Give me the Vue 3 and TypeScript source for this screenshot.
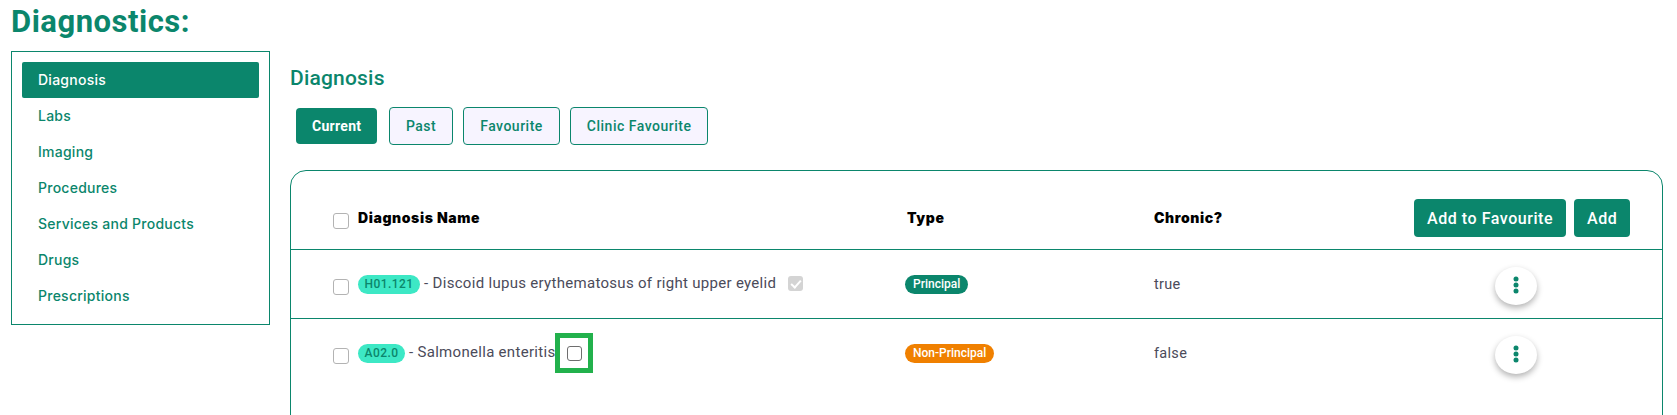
<script setup lang="ts">
interface Row {
  code: string;
  name: string;
  type: string;
  chronic: string;
  principal: boolean;
}

const menu: string[] = ["Diagnosis", "Labs", "Imaging", "Procedures", "Services and Products", "Drugs", "Prescriptions"];
const tabs: string[] = ["Current", "Past", "Favourite", "Clinic Favourite"];
const rows: Row[] = [
  { code: "H01.121", name: "Discoid lupus erythematosus of right upper eyelid", type: "Principal", chronic: "true", principal: true },
  { code: "A02.0", name: "Salmonella enteritis", type: "Non-Principal", chronic: "false", principal: false },
];
</script>

<template>
  <div class="page">
    <h1 class="title">Diagnostics:</h1>
    <div class="layout">
      <ul class="side">
        <li v-for="(item, i) in menu" :key="item" class="side-item" :class="{ active: i === 0 }">{{ item }}</li>
      </ul>

      <div class="main">
        <h2 class="heading">Diagnosis</h2>
        <div class="tabs">
          <button v-for="(tab, i) in tabs" :key="tab" class="tab" :class="{ current: i === 0 }">{{ tab }}</button>
        </div>

        <div class="table">
          <div class="row head">
            <div class="name-cell">
              <input type="checkbox" class="check" />
              <span class="head-text">Diagnosis Name</span>
            </div>
            <div class="head-text">Type</div>
            <div class="head-text">Chronic?</div>
            <div class="actions">
              <button class="action">Add to Favourite</button>
              <button class="action">Add</button>
            </div>
          </div>

          <div v-for="row in rows" :key="row.code" class="row body">
            <div class="name-cell">
              <input type="checkbox" class="check" />
              <span class="code">{{ row.code }}</span>
              <span class="desc">- {{ row.name }}</span>
              <input v-if="row.principal" type="checkbox" class="small done" checked disabled />
              <span v-else class="marked"><input type="checkbox" class="small" /></span>
            </div>
            <div>
              <span class="pill" :class="row.principal ? 'teal' : 'orange'">{{ row.type }}</span>
            </div>
            <div class="chronic">{{ row.chronic }}</div>
            <div class="more-cell">
              <button class="more" aria-label="More">
                <svg width="6" height="18" viewBox="0 0 6 18"><circle cx="3" cy="3" r="2.5" /><circle cx="3" cy="9" r="2.5" /><circle cx="3" cy="15" r="2.5" /></svg>
              </button>
            </div>
          </div>
        </div>
      </div>
    </div>
  </div>
</template>

<style>
html,
body {
  margin: 0;
  background: #fff;
  overflow: hidden;
}
</style>

<style scoped>
.page {
  width: 1677px;
  height: 415px;
  overflow: hidden;
  box-sizing: border-box;
  padding: 0 14px 0 11px;
  font-family: Roboto, "Liberation Sans", sans-serif;
  color: #0b866c;
}
.title {
  margin: 0;
  height: 51px;
  font-size: 31px;
  line-height: 43px;
  font-weight: 700;
  letter-spacing: 0.5px;
}
.layout {
  display: flex;
  align-items: flex-start;
  gap: 20px;
}
.side {
  width: 259px;
  height: 274px;
  box-sizing: border-box;
  margin: 0;
  padding: 10px;
  list-style: none;
  border: 1px solid #0b866c;
  flex: none;
}
.side-item {
  height: 36px;
  line-height: 36px;
  padding-left: 16px;
  border-radius: 2px;
  font-family: Inter, "Liberation Sans", sans-serif;
  font-size: 14px;
  font-weight: 500;
  letter-spacing: 0.25px;
}
.side-item.active {
  background: #0b866c;
  color: #fff;
}
.main {
  flex: 1;
  min-width: 0;
}
.heading {
  margin: 0;
  padding-top: 15px;
  height: 41px;
  font-size: 21px;
  line-height: 24px;
  font-weight: 500;
  letter-spacing: 0.2px;
}
.tabs {
  display: flex;
  align-items: center;
  gap: 10px;
  height: 38px;
  padding-left: 6px;
}
.tab {
  height: 38px;
  padding: 0 16px;
  border: 1px solid #0b866c;
  border-radius: 4px;
  background: #f7f4ff;
  color: #0b866c;
  font: 500 14px Roboto, sans-serif;
  letter-spacing: 0.5px;
}
.tab.current {
  height: 36px;
  margin-right: 1.5px;
  border: 0;
  background: #0b866c;
  color: #fff;
  font-weight: 700;
  letter-spacing: 0.3px;
}
.table {
  margin-top: 25px;
  height: 320px;
  box-sizing: border-box;
  border: 1px solid #0b866c;
  border-radius: 16px;
}
.row {
  display: grid;
  align-items: center;
  padding-left: 42px;
  box-sizing: border-box;
}
.row.body {
  grid-template-columns: 572px 249px 341px 1fr;
  height: 69px;
  border-top: 1px solid #0b866c;
}
.row.head {
  grid-template-columns: 574px 247px 260px 1fr;
  height: 78px;
  padding-top: 16px;
}
.name-cell {
  display: flex;
  align-items: center;
}
.check {
  appearance: none;
  width: 16px;
  height: 16px;
  margin: 5px 9px 0 0;
  flex: none;
  box-sizing: border-box;
  border: 1px solid #b3b3b3;
  border-radius: 3px;
  background: #fff;
}
.head-text {
  font-family: Inter, "Liberation Sans", sans-serif;
  font-size: 14px;
  font-weight: 900;
  color: #000;
  letter-spacing: 0.6px;
  margin-top: -2px;
}
.actions {
  display: flex;
  gap: 8px;
}
.action {
  height: 38px;
  padding: 0 13px;
  border: 0;
  border-radius: 4px;
  background: #0b866c;
  color: #fff;
  font: 500 16px Roboto, sans-serif;
  letter-spacing: 0.55px;
}
.code {
  height: 19px;
  line-height: 19px;
  padding: 0 6.5px;
  margin-right: 4px;
  margin-top: 1px;
  border-radius: 10px;
  background: #3de8c5;
  color: #0b866c;
  font-size: 12px;
  font-weight: 500;
  letter-spacing: 0.45px;
}
.desc {
  font-size: 15px;
  color: #4b4b5a;
  letter-spacing: 0.3px;
  margin-top: -3px;
}
.chronic {
  font-size: 14.5px;
  color: #4b4b5a;
  letter-spacing: 0.3px;
}
.small {
  appearance: none;
  display: block;
  width: 15px;
  height: 15px;
  margin: 0;
  box-sizing: border-box;
  border: 1px solid #6e6e6e;
  border-radius: 3px;
  background: #fff;
}
.small.done {
  position: relative;
  margin: -2px 0 0 12px;
  border: 0;
  background: #d4d4d4;
}
.small.done::after {
  content: "";
  position: absolute;
  left: 5px;
  top: 2px;
  width: 4px;
  height: 8px;
  border: solid #fff;
  border-width: 0 2px 2px 0;
  transform: rotate(42deg);
}
.marked {
  border: 5px solid #22b14c;
  box-sizing: border-box;
  width: 38px;
  height: 40px;
  display: flex;
  align-items: center;
  justify-content: center;
}
.pill {
  display: inline-block;
  height: 19px;
  line-height: 19px;
  padding: 0 8px;
  border-radius: 10px;
  color: #fff;
  font-size: 12px;
  font-weight: 500;
  vertical-align: top;
}
.pill.teal {
  background: #0b866c;
}
.pill.orange {
  background: #f08000;
}
.more-cell {
  display: flex;
}
.more {
  width: 42px;
  height: 38px;
  border: 0;
  padding: 0 0 3px;
  border-radius: 50%;
  background: #fff;
  box-shadow: 0 3px 6px rgba(0, 0, 0, 0.3);
  display: flex;
  align-items: center;
  justify-content: center;
  margin-top: 4px;
}
.more svg {
  fill: #0b866c;
}
</style>
